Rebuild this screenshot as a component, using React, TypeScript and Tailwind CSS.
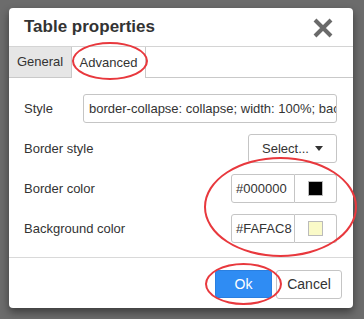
const Row = ({ label, children }: { label: string; children: React.ReactNode }) => (
  <div className="flex h-[29px] items-center justify-between">
    <span className="text-[13px] text-[#333]">{label}</span>
    {children}
  </div>
);

const ColorField = ({ value, swatch }: { value: string; swatch: string }) => (
  <div className="flex h-[29px]">
    <div className="flex w-[64px] items-center overflow-hidden whitespace-nowrap rounded-l-[3px] border border-[#c5c5c5] pl-[4px] text-[13px] text-[#333]">
      {value}
    </div>
    <div className="flex w-[42px] items-center justify-center rounded-r-[3px] border border-l-0 border-[#c5c5c5]">
      <span className="h-[15px] w-[15px] border border-[#bbb]" style={{ backgroundColor: swatch }} />
    </div>
  </div>
);

const App: React.FC = () => {
  return (
    <div className="relative h-[319px] w-[364px] overflow-hidden bg-[#6c6c6c] pl-[9px] pt-[8px] font-['Liberation_Sans',Arial,sans-serif]">
      <div className="flex h-[300px] w-[344px] flex-col rounded-[4px] bg-white shadow-[0_4px_8px_rgba(0,0,0,0.45)]">
        {/* Header */}
        <div className="flex h-[39px] items-center justify-between border-b border-[#d4d4d4] pl-[15px] pr-[20px]">
          <span className="text-[17px] font-bold text-[#333]">Table properties</span>
          <svg width="20" height="20" viewBox="0 0 20 20" className="mt-[2px]">
            <path d="M2 2 L18 18 M18 2 L2 18" stroke="#6a6a6a" strokeWidth="4" strokeLinecap="butt" />
          </svg>
        </div>

        {/* Tabs */}
        <div className="flex h-[31px] text-[13px] text-[#333]">
          <div className="flex w-[63px] items-center justify-center border-b border-r border-[#c9c9c9] bg-[#e6e6e6]">
            General
          </div>
          <div className="flex w-[74px] items-center justify-center border-r border-[#c9c9c9] bg-white">
            Advanced
          </div>
          <div className="flex-1 border-b border-[#c9c9c9]" />
        </div>

        {/* Body */}
        <div className="flex flex-col gap-[11px] border-b border-[#d9d9d9] pb-[14px] pl-[15px] pr-[16px] pt-[16px]">
          <Row label="Style">
            <div className="flex h-[29px] w-[254px] items-center overflow-hidden whitespace-nowrap rounded-[3px] border border-[#c5c5c5] pl-[5px] text-[13px] text-[#333]">
              border-collapse: collapse; width: 100%; background-color: #FAFAC8;
            </div>
          </Row>
          <Row label="Border style">
            <div className="flex h-[29px] w-[89px] items-center justify-center gap-[6px] rounded-[3px] border border-[#c5c5c5] text-[13px] text-[#333]">
              <span>Select...</span>
              <svg width="8" height="5" viewBox="0 0 8 5">
                <path d="M0 0 H8 L4 5 Z" fill="#333" />
              </svg>
            </div>
          </Row>
          <Row label="Border color">
            <ColorField value="#000000" swatch="#000000" />
          </Row>
          <Row label="Background color">
            <ColorField value="#FAFAC8" swatch="#FAFAC8" />
          </Row>
        </div>

        {/* Footer */}
        <div className="flex justify-end gap-[4px] pr-[11px] pt-[12px]">
          <button className="h-[28px] w-[57px] rounded-[3px] border border-[#2a7fe0] bg-[#2f8cf3] text-[14px] text-white">
            Ok
          </button>
          <button className="h-[29px] w-[66px] rounded-[3px] border border-[#c5c5c5] bg-white text-[14px] text-[#333]">
            Cancel
          </button>
        </div>
      </div>

      {/* Annotation ellipses */}
      <div className="absolute left-[72px] top-[42px] h-[38px] w-[76px] rounded-[50%] border-2 border-[#e8383d]" />
      <div className="absolute left-[204px] top-[157px] h-[100px] w-[153px] rounded-[50%] border-2 border-[#e8383d]" />
      <div className="absolute left-[205px] top-[263px] h-[42px] w-[77px] rounded-[50%] border-2 border-[#e8383d]" />
    </div>
  );
};

export default App;
